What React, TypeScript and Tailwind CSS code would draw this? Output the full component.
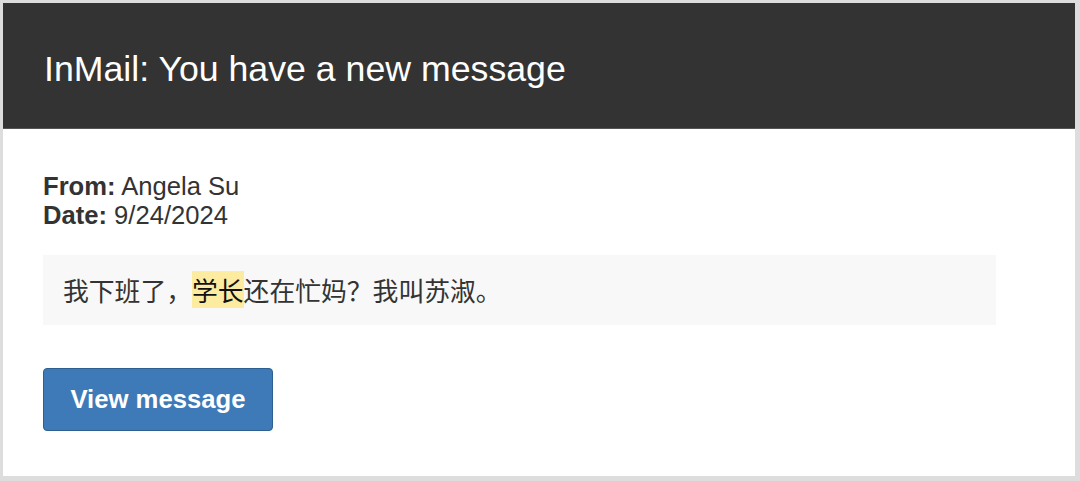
export default function App() {
  return (
    <div className="w-[1080px] h-[481px] bg-[#dddddd] pt-[3px] pl-[3px] pr-[5px] pb-[5px]" style={{ fontFamily: '"Liberation Sans", Arial, "Noto Sans CJK SC", sans-serif' }}>
      <div className="h-full bg-white flex flex-col">
        <div className="h-[126px] bg-[#333333] border-b border-[#555555] flex items-center pl-[41px] pt-[8px]">
          <h1 className="text-[35.7px] text-white leading-none">InMail: You have a new message</h1>
        </div>
        <div className="pl-[40px] pt-[43px] text-[#333333]">
          <div className="text-[25.6px] leading-[29px]">
            <div><span className="font-bold">From:</span> Angela Su</div>
            <div><span className="font-bold">Date:</span> 9/24/2024</div>
          </div>
          <div className="mt-[25px] w-[953px] h-[70px] bg-[#f8f8f8] flex items-center pl-[20px] text-[25.8px] text-[#333333]" style={{ fontFamily: '"Noto Sans CJK SC", "Liberation Sans", sans-serif' }}>
            <span className="leading-[28px]">我下班了，<span className="bg-[#fdeca0] text-[#111111]">学长</span>还在忙妈？我叫苏淑。</span>
          </div>
          <button className="mt-[43px] w-[230px] h-[63px] bg-[#3d7ab7] border border-[#2d5f91] rounded-[4px] text-white font-bold text-[25.7px] flex items-center justify-center">
            View message
          </button>
        </div>
      </div>
    </div>
  );
}
